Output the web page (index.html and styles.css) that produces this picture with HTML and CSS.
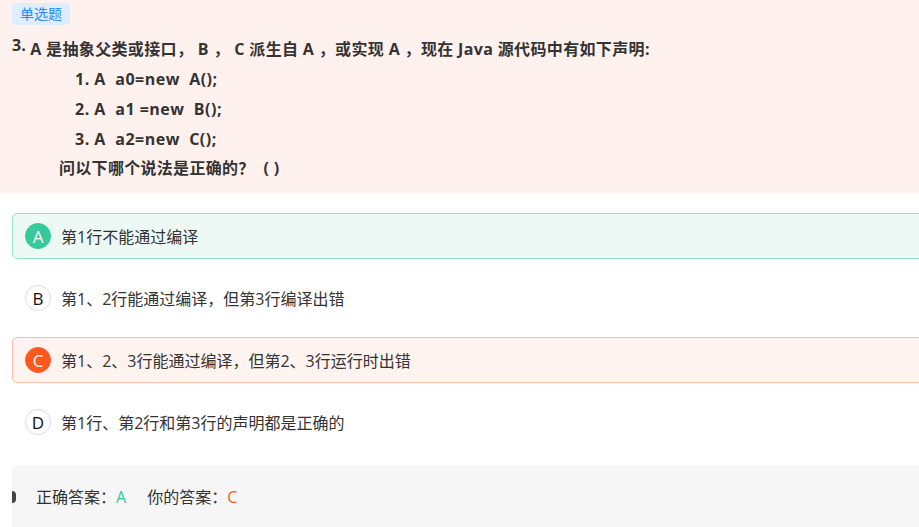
FILE: index.html
```html
<!DOCTYPE html>
<html lang="zh">
<head>
<meta charset="utf-8">
<link rel="stylesheet" href="styles.css">
</head>
<body>
<div class="page">
  <section class="question">
    <span class="tag">单选题</span>
    <div class="title"><span class="num">3.</span> A 是抽象父类或接口， B ， C 派生自 A ，或实现 A ，现在 Java 源代码中有如下声明:</div>
    <div class="code">1. A&nbsp; a0=new&nbsp; A();</div>
    <div class="code">2. A&nbsp; a1 =new&nbsp; B();</div>
    <div class="code">3. A&nbsp; a2=new&nbsp; C();</div>
    <div class="ask">问以下哪个说法是正确的？&nbsp; ( )</div>
  </section>
  <ul class="options">
    <li class="option right"><span class="letter">A</span><span class="text">第1行不能通过编译</span></li>
    <li class="option"><span class="letter">B</span><span class="text">第1、2行能通过编译，但第3行编译出错</span></li>
    <li class="option wrong"><span class="letter">C</span><span class="text">第1、2、3行能通过编译，但第2、3行运行时出错</span></li>
    <li class="option"><span class="letter">D</span><span class="text">第1行、第2行和第3行的声明都是正确的</span></li>
  </ul>
  <div class="answer">
    <span class="label">正确答案：</span><span class="ok">A</span>
    <span class="label">你的答案：</span><span class="bad">C</span>
  </div>
</div>
</body>
</html>
```
FILE: styles.css
```css
html, body {
  margin: 0;
  padding: 0;
  background: #fff;
  overflow: hidden;
}
body {
  font-family: "Open Sans", "Noto Sans CJK SC", sans-serif;
  color: #333;
}
.page {
  width: 1000px;
}
.question {
  background: #fff1ed;
  padding: 2px 0 10px 12px;
}
.tag {
  display: inline-block;
  background: #ddeeff;
  color: #2b8af7;
  font-size: 14px;
  line-height: 22px;
  height: 22px;
  padding: 0 8px;
  border-radius: 4px;
}
.title {
  margin-top: 5px;
  font-size: 16px;
  font-weight: 700;
  line-height: 30px;
  letter-spacing: 0.35px;
  color: #333;
}
.num {
  vertical-align: 4px;
  letter-spacing: 0;
}
.code {
  font-size: 16px;
  font-weight: 700;
  line-height: 30px;
  letter-spacing: 0.5px;
  padding-left: 63px;
}
.ask {
  font-size: 16px;
  font-weight: 700;
  line-height: 30px;
  letter-spacing: 0.3px;
  padding-left: 47px;
  margin-top: -1px;
}
.options {
  list-style: none;
  margin: 20px 0 0 12px;
  padding: 0;
  display: flex;
  flex-direction: column;
  gap: 16px;
}
.option {
  display: flex;
  align-items: center;
  gap: 10px;
  height: 44px;
  padding-left: 12px;
  border: 1px solid transparent;
  border-radius: 5px;
  font-size: 16px;
}
.letter {
  width: 26px;
  height: 26px;
  box-sizing: border-box;
  border-radius: 50%;
  border: 1px solid #dcdcdc;
  background: #fff;
  display: flex;
  align-items: center;
  justify-content: center;
  font-size: 17px;
  color: #111;
}
.text {
  color: #333;
}
.right {
  background: #edf9f5;
  border-color: #97e3c6;
}
.right .letter {
  background: #36c99b;
  border-color: #36c99b;
  color: #fff;
}
.wrong {
  background: #fff3f0;
  border-color: #ffbea8;
}
.wrong .letter {
  background: #ff581f;
  border-color: #ff581f;
  color: #fff;
}
.answer {
  position: relative;
  margin: 20px 0 0 12px;
  background: #f6f6f6;
  border-radius: 6px;
  height: 80px;
  padding: 22px 0 0 24px;
  box-sizing: border-box;
  font-size: 16px;
  line-height: 20px;
}
.answer::before {
  content: "";
  position: absolute;
  left: 0;
  top: 26px;
  width: 4px;
  height: 12px;
  border-radius: 0 6px 6px 0;
  background: #444;
}
.label {
  color: #333;
}
.ok {
  color: #36c99b;
  margin-right: 17px;
}
.bad {
  color: #ff581f;
}
```
